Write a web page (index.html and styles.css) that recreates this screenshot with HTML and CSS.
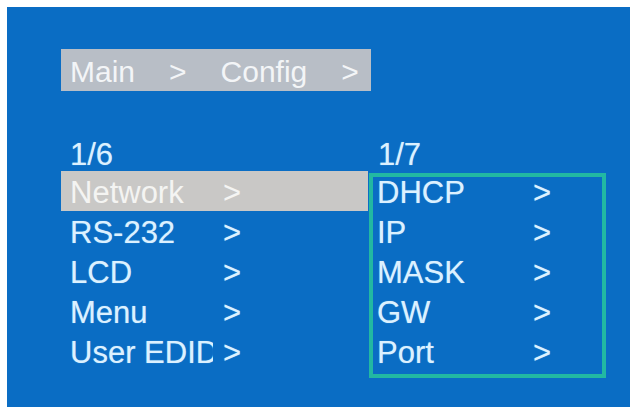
FILE: index.html
```html
<!DOCTYPE html>
<html>
<head>
	<title>Config</title>
	<link rel="stylesheet" href="styles.css">
</head>
<body>
	<div class="screen">
		<div class="crumb">
			<span>Main</span>
			<span>&gt;</span>
			<span>Config</span>
			<span>&gt;</span>
		</div>

		<div class="menus">
			<div class="col-main">
				<div class="title">1/6</div>
				<div class="row active"><span class="label">Network</span><span class="arrow">&gt;</span></div>
				<div class="row"><span class="label">RS-232</span><span class="arrow">&gt;</span></div>
				<div class="row"><span class="label">LCD</span><span class="arrow">&gt;</span></div>
				<div class="row"><span class="label">Menu</span><span class="arrow">&gt;</span></div>
				<div class="row"><span class="label">User EDID</span><span class="arrow">&gt;</span></div>
			</div>

			<div class="col-sub">
				<div class="title">1/7</div>
				<div class="box">
					<div class="list">
						<div class="row"><span class="label">DHCP</span><span class="arrow">&gt;</span></div>
						<div class="row"><span class="label">IP</span><span class="arrow">&gt;</span></div>
						<div class="row"><span class="label">MASK</span><span class="arrow">&gt;</span></div>
						<div class="row"><span class="label">GW</span><span class="arrow">&gt;</span></div>
						<div class="row"><span class="label">Port</span><span class="arrow">&gt;</span></div>
					</div>
				</div>
			</div>
		</div>
	</div>
</body>
</html>
```

FILE: styles.css
```css
* {
	margin: 0;
	padding: 0;
	box-sizing: border-box;
}

body {
	background: #fff;
	padding: 7px 4px 3px 7px;
	font-family: "Liberation Sans", Arial, sans-serif;
	overflow: hidden;
}

.screen {
	background: #0a6dc4;
	height: 400px;
	padding: 42px 0 0 54px;
	color: #dcf1ff;
	font-size: 31px;
	text-shadow: 0 0 1px rgba(200, 235, 255, 0.6);
}

.crumb {
	display: inline-flex;
	gap: 34px;
	height: 42px;
	padding: 0 12px 0 9px;
	background: #b8bec6;
	color: #f3f5f7;
	font-size: 30px;
	line-height: 46px;
	text-shadow: none;
}

.menus {
	display: flex;
	margin-top: 42px;
}

.title {
	height: 38px;
	line-height: 44px;
	padding-left: 9px;
}

.row {
	display: flex;
	height: 40px;
	line-height: 44px;
	padding-left: 9px;
	white-space: nowrap;
}

.row.active {
	background: #c9c8c6;
	color: #f4f4f2;
	text-shadow: none;
}

/* long names get cut at the arrow column, like on the device */
.label {
	width: 143px;
	overflow: hidden;
}

.arrow {
	margin-left: 10px;
}

.col-main {
	width: 307px;
}

.col-sub {
	width: 238px;
}

.col-sub .title {
	padding-left: 10px;
}

.box {
	margin: 2px 0 0 1px;
	border: 4px solid #22b8a2;
	padding-bottom: 3px;
}

.box .list {
	margin-top: -6px;
}

.box .row {
	padding-left: 4px;
}

.box .label {
	width: 156px;
}

.box .arrow {
	margin-left: 0;
}
```
